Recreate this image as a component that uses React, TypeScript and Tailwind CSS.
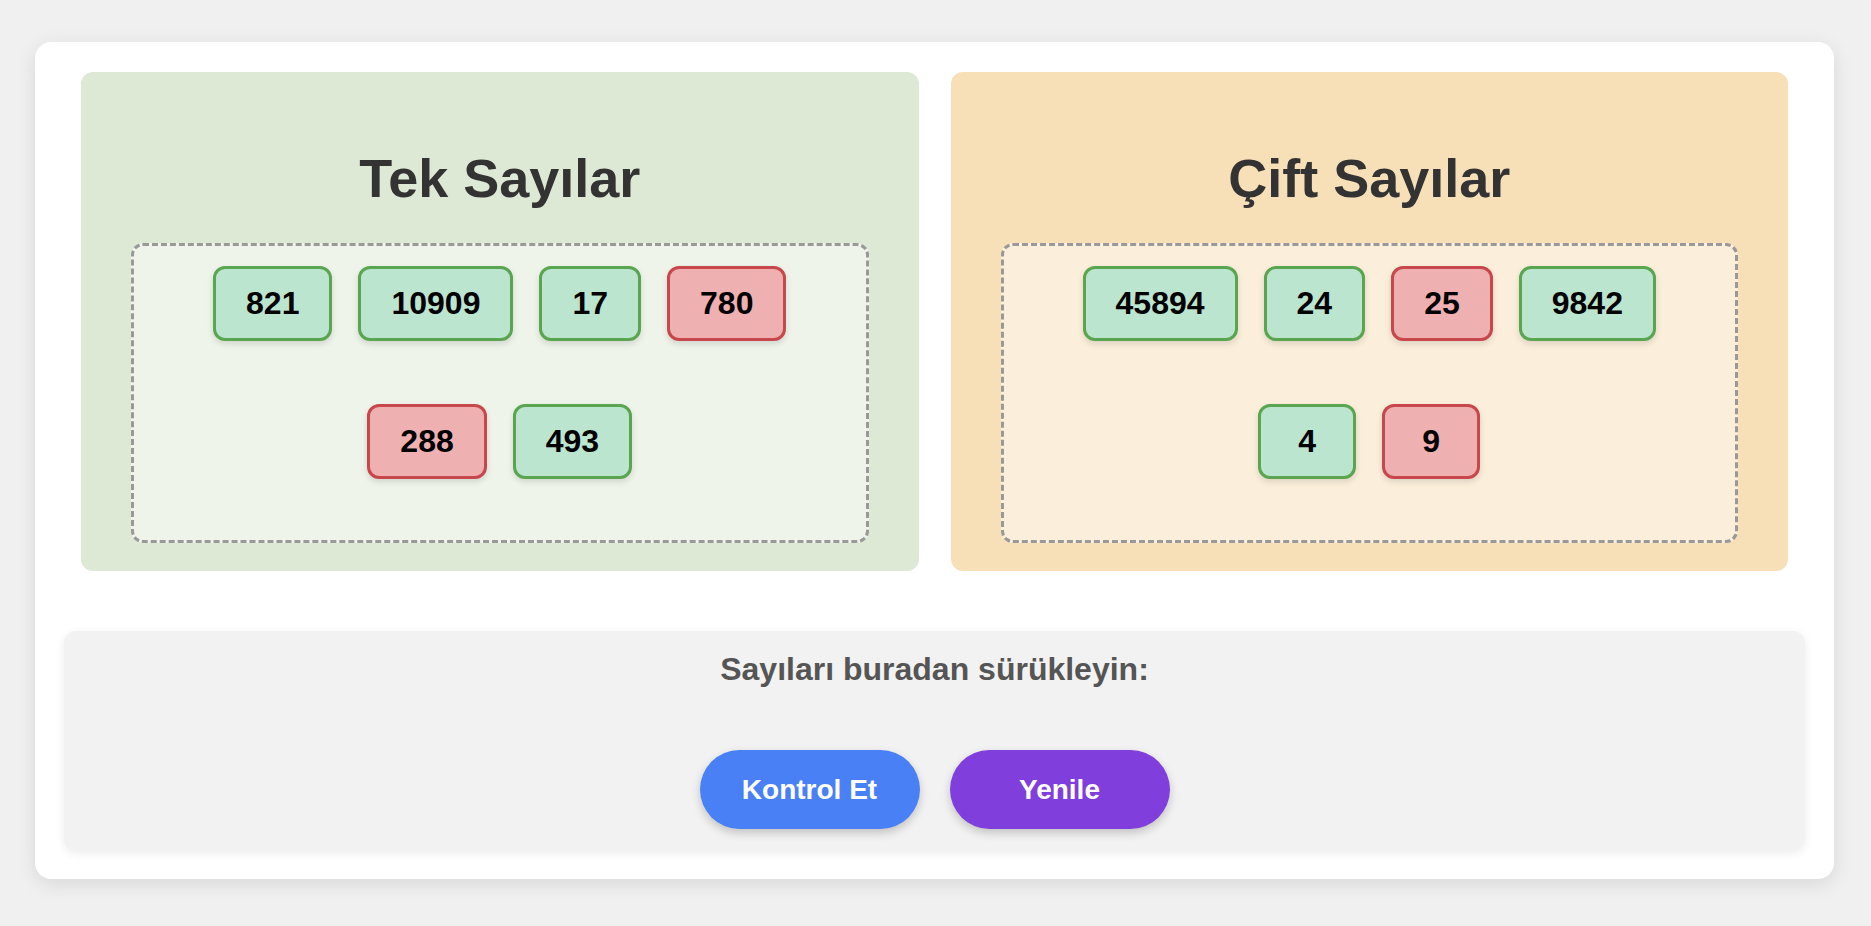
import React from "react";

type Tile = { v: string; ok: boolean };

const Num = ({ v, ok }: Tile) => (
  <div
    className={
      ok
        ? "min-w-[98px] text-center rounded-[12px] border-[3px] border-[#5aa550] bg-[#bce5d0] px-[30px] py-[16px] text-[32px] leading-[37px] font-bold text-black shadow-[0_3px_6px_rgba(0,0,0,0.12)]"
        : "min-w-[98px] text-center rounded-[12px] border-[3px] border-[#c8474c] bg-[#eeb0b0] px-[30px] py-[16px] text-[32px] leading-[37px] font-bold text-black shadow-[0_3px_6px_rgba(0,0,0,0.12)]"
    }
  >
    {v}
  </div>
);

const Panel = ({
  title,
  bg,
  rows,
}: {
  title: string;
  bg: string;
  rows: Tile[][];
}) => (
  <div className={`${bg} flex flex-col rounded-[12px] pt-[75px] pb-[28px]`}>
    <h2 className="text-center text-[54px] leading-[62px] font-bold text-[#333333]">
      {title}
    </h2>
    <div className="mx-[50px] mt-[34px] h-[300px] rounded-[12px] border-[3px] border-dashed border-[#999999] bg-white/50 pt-[20px]">
      <div className="flex flex-col gap-[63px]">
        {rows.map((r, i) => (
          <div key={i} className="flex justify-center gap-[26px]">
            {r.map((t) => (
              <Num key={t.v} {...t} />
            ))}
          </div>
        ))}
      </div>
    </div>
  </div>
);

export default function App() {
  return (
    <div
      className="min-h-screen bg-[#f0f0f0] pt-[42px] pb-[47px]"
      style={{ fontFamily: '"Liberation Sans", Arial, sans-serif' }}
    >
      <div className="ml-[35px] w-[1799px] rounded-[16px] bg-white px-[29px] pt-[30px] pb-[29px] shadow-[0_5px_20px_rgba(0,0,0,0.1)]">
        <div className="grid grid-cols-2 gap-[32px] px-[17px]">
          <Panel
            title="Tek Sayılar"
            bg="bg-[#dde8d5]"
            rows={[
              [
                { v: "821", ok: true },
                { v: "10909", ok: true },
                { v: "17", ok: true },
                { v: "780", ok: false },
              ],
              [
                { v: "288", ok: false },
                { v: "493", ok: true },
              ],
            ]}
          />
          <Panel
            title="Çift Sayılar"
            bg="bg-[#f7dfb7]"
            rows={[
              [
                { v: "45894", ok: true },
                { v: "24", ok: true },
                { v: "25", ok: false },
                { v: "9842", ok: true },
              ],
              [
                { v: "4", ok: true },
                { v: "9", ok: false },
              ],
            ]}
          />
        </div>
        <div className="mt-[60px] flex flex-col items-center rounded-[12px] bg-[#f2f2f2] pt-[20px] pb-[21px] shadow-[0_3px_10px_rgba(0,0,0,0.08)]">
          <div className="text-[32px] leading-[37px] font-bold text-[#555555]">
            Sayıları buradan sürükleyin:
          </div>
          <div className="mt-[62px] flex gap-[30px]">
            <button className="h-[79px] w-[220px] rounded-full bg-[#4a80f5] text-[28px] font-bold text-white shadow-[0_4px_10px_rgba(0,0,0,0.2)]">
              Kontrol Et
            </button>
            <button className="h-[79px] w-[220px] rounded-full bg-[#803edc] text-[28px] font-bold text-white shadow-[0_4px_10px_rgba(0,0,0,0.2)]">
              Yenile
            </button>
          </div>
        </div>
      </div>
    </div>
  );
}
